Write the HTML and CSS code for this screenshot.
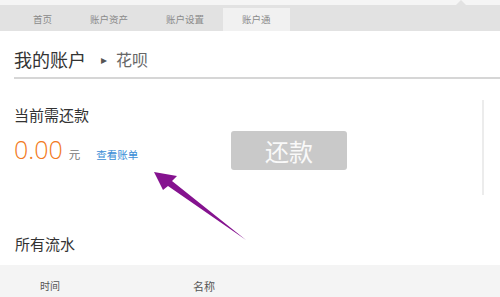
FILE: index.html
```
<html>

<head>
    <title>我的账户 - 花呗</title>
    <link rel="stylesheet" href="styles.css">
</head>

<body>
    <div class="topstrip">
        <span class="notch"></span>
    </div>
    <div class="nav">
        <a class="tab">首页</a>
        <a class="tab">账户资产</a>
        <a class="tab">账户设置</a>
        <a class="tab active">账户通</a>
    </div>

    <div class="crumbs">
        <span class="crumb-main">我的账户</span>
        <span class="crumb-arrow">&#9656;</span>
        <span class="crumb-sub">花呗</span>
    </div>

    <div class="summary">
        <div class="due">
            <div class="section-title">当前需还款</div>
            <div class="amount-row">
                <span class="amount">0.00</span>
                <span class="unit">元</span>
                <a class="bill-link">查看账单</a>
            </div>
        </div>
        <button class="pay-button">还款</button>
    </div>

    <div class="section-title flow-title">所有流水</div>
    <div class="table-head">
        <span class="col-time">时间</span>
        <span class="col-name">名称</span>
    </div>

    <!-- annotation arrow pointing at the bill link -->
    <svg class="pointer" width="500" height="297" viewBox="0 0 500 297">
        <polygon points="154,172 177,176 172,181 246,240 168,186 163,190" fill="#85138f" />
    </svg>
</body>

</html>
```

FILE: styles.css
```
html,
body {
    height: 100%;
    margin: 0;
}

body {
    font-family: "Noto Sans CJK SC", "Noto Sans", sans-serif;
    background-color: #ffffff;
    color: #333;
    overflow: hidden;
    position: relative;
}

.topstrip {
    height: 5px;
    background-color: #f5f5f5;
    position: relative;
}

.notch {
    position: absolute;
    left: 456px;
    top: 0;
    width: 0;
    height: 0;
    border-left: 5px solid transparent;
    border-right: 5px solid transparent;
    border-bottom: 5px solid #e2e2e2;
}

.nav {
    height: 26px;
    background-color: #e2e2e2;
    display: flex;
    padding-left: 14px;
    box-sizing: border-box;
    padding-top: 3px;
}

.tab {
    padding: 0 19px;
    font-size: 9.5px;
    line-height: 23px;
    color: #8a8a8a;
}

.tab.active {
    background-color: #f1f1f1;
}

.crumbs {
    margin-left: 14px;
    padding: 19px 0 9px 0;
    border-bottom: 2px solid #d6d6d6;
    display: flex;
    align-items: center;
    height: 18px;
}

.crumb-main {
    font-size: 18px;
    line-height: 18px;
    color: #333;
}

.crumb-arrow {
    font-size: 12px;
    line-height: 18px;
    color: #555;
    margin: 0 9px 0 15px;
}

.crumb-sub {
    font-size: 16px;
    line-height: 18px;
    color: #666;
}

.summary {
    margin: 21px 16px 0 14px;
    height: 95px;
    border-right: 2px solid #ececec;
    display: flex;
}

.due {
    width: 217px;
    padding-top: 7px;
}

.section-title {
    font-size: 15px;
    line-height: 15px;
    color: #333;
}

.amount-row {
    margin-top: 12px;
    display: flex;
    align-items: baseline;
}

.amount {
    font-family: "Open Sans", sans-serif;
    font-weight: 300;
    font-size: 25px;
    line-height: 30px;
    color: #f27a22;
}

.unit {
    font-size: 11.5px;
    color: #777;
    margin-left: 6px;
}

.bill-link {
    font-size: 10.5px;
    color: #3a8dd6;
    margin-left: 16px;
}

.pay-button {
    margin-top: 31px;
    width: 116px;
    height: 39px;
    border: none;
    border-radius: 3px;
    background-color: #c9c9c9;
    color: #f9f9f9;
    font-family: "Noto Sans CJK SC", sans-serif;
    font-size: 24px;
    line-height: 39px;
    padding: 0;
}

.flow-title {
    margin: 41px 0 0 15px;
}

.table-head {
    margin-top: 14px;
    height: 40px;
    background-color: #f4f4f4;
    display: flex;
    padding-top: 16px;
    box-sizing: border-box;
    font-size: 10px;
    line-height: 10px;
    color: #555;
}

.col-time {
    margin-left: 40px;
}

.col-name {
    margin-left: 133px;
    font-size: 11px;
}

.pointer {
    position: absolute;
    left: 0;
    top: 0;
}
```
